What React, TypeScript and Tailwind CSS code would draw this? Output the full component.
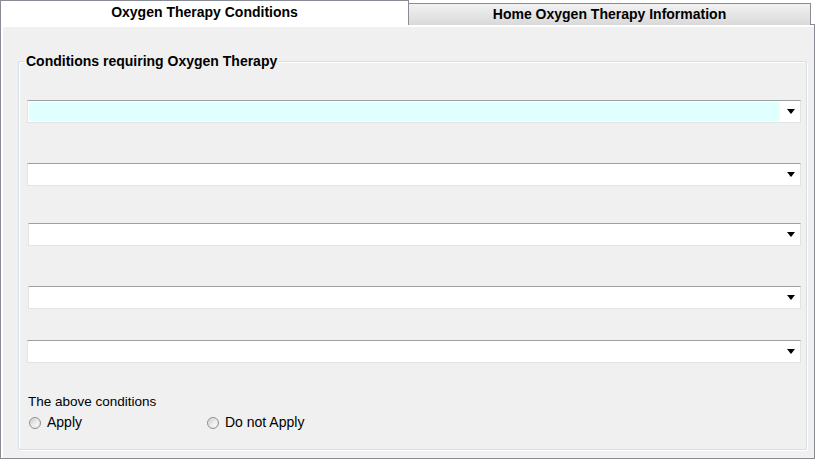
const font = { fontFamily: '"Liberation Sans", Arial, sans-serif' };

function Combo({ highlight = false, className = "" }: { highlight?: boolean; className?: string }) {
  return (
    <div
      className={`flex h-[23px] items-stretch border border-[#e3e3e3] border-t-[#a0a0a0] bg-white ${className}`}
    >
      <div className="flex-1 p-[1px]">
        {highlight && <div className="h-full w-full bg-[#e0ffff]" />}
      </div>
      <div className="flex w-[19px] items-center justify-center">
        <svg width="8" height="5" viewBox="0 0 8 5">
          <path d="M0 0h8L4 5z" fill="#000" />
        </svg>
      </div>
    </div>
  );
}

function Radio({ label }: { label: string }) {
  return (
    <label className="flex items-center text-[14px] leading-[15px] text-black">
      <span className="mr-[6px] h-[12px] w-[12px] rounded-full border border-[#8e8f8f] bg-gradient-to-br from-[#c4c4c4] via-[#ececec] to-white shadow-[inset_0_0_0_1px_#e4e4e4]" />
      {label}
    </label>
  );
}

export default function App() {
  return (
    <div className="h-[461px] w-[817px] bg-white" style={font}>
      <div className="flex items-end">
        <div className="relative z-10 flex h-[25px] w-[409px] items-center justify-center border border-b-0 border-[#898c95] bg-white pb-[2px] text-[14px] font-bold text-black">
          Oxygen Therapy Conditions
        </div>
        <div className="-ml-px flex h-[22px] w-[403px] items-center justify-center border border-b-0 border-[#898c95] bg-gradient-to-b from-[#f2f2f2] to-[#d9d9d9] text-[14px] font-bold text-black">
          Home Oxygen Therapy Information
        </div>
      </div>
      <div className="-mt-px h-[435px] w-[815px] border border-[#898c95] bg-[#f0f0f0] px-[17px] pt-[36px] shadow-[inset_1px_1px_0_#ffffff,inset_2px_2px_0_#ffffff]">
        <div className="relative h-[389px] w-[789px] rounded-[2px] border border-[#d5dfe5] pl-[8px] pr-[5px] shadow-[1px_1px_0_#ffffff,inset_1px_1px_0_#ffffff]">
          <span className="absolute left-[6px] top-[-9px] bg-[#f0f0f0] px-[1px] text-[14px] font-bold leading-[16px] text-black">
            Conditions requiring Oxygen Therapy
          </span>
          <Combo highlight className="mt-[38px]" />
          <Combo className="mt-[40px]" />
          <Combo className="mt-[37px] ml-[1px]" />
          <Combo className="mt-[40px] ml-[1px]" />
          <Combo className="mt-[31px]" />
          <div className="ml-[1px] mt-[31px] text-[13.5px] leading-[15px] text-black">The above conditions</div>
          <div className="ml-[2px] mt-[6px] flex">
            <div className="w-[178px]">
              <Radio label="Apply" />
            </div>
            <Radio label="Do not Apply" />
          </div>
        </div>
      </div>
    </div>
  );
}
